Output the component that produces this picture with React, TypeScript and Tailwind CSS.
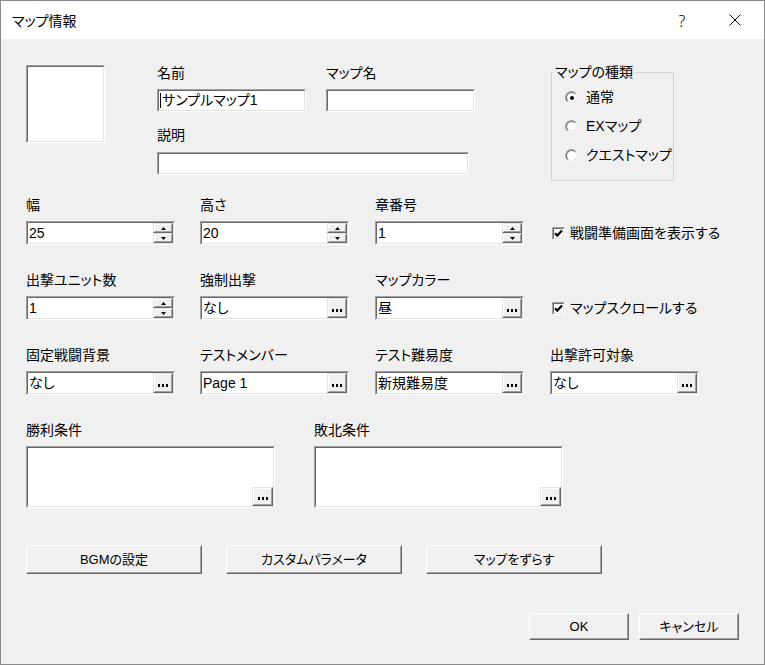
import React from "react";

const fieldOuter =
  "border border-t-[#a0a0a0] border-l-[#a0a0a0] border-b-white border-r-white";
const fieldInner =
  "border border-t-[#696969] border-l-[#696969] border-b-[#e3e3e3] border-r-[#e3e3e3] bg-white";

function RaisedSmall({ className, children }: { className?: string; children?: React.ReactNode }) {
  return (
    <div
      className={`border border-t-[#e3e3e3] border-l-[#e3e3e3] border-b-[#696969] border-r-[#696969] bg-[#f0f0f0] ${className ?? ""}`}
    >
      <div className="w-full h-full border border-t-white border-l-white border-b-[#a0a0a0] border-r-[#a0a0a0] flex items-center justify-center">
        {children}
      </div>
    </div>
  );
}

function Dots() {
  return (
    <div className="flex gap-[2px] pt-[4px]">
      <span className="block w-[2px] h-[3px] bg-black" />
      <span className="block w-[2px] h-[3px] bg-black" />
      <span className="block w-[2px] h-[3px] bg-black" />
    </div>
  );
}

function Spin() {
  return (
    <div className="w-[20px] flex flex-col">
      <RaisedSmall className="flex-1">
        <svg width="5" height="3" viewBox="0 0 5 3">
          <path d="M2.5 0L5 3H0z" fill="#000" />
        </svg>
      </RaisedSmall>
      <RaisedSmall className="flex-1">
        <svg width="5" height="3" viewBox="0 0 5 3">
          <path d="M0 0H5L2.5 3z" fill="#000" />
        </svg>
      </RaisedSmall>
    </div>
  );
}

function Field({
  value,
  kind,
  caret,
  w = "w-[149px]",
  h = "h-[24px]",
}: {
  value?: string;
  kind?: "spin" | "dots";
  caret?: boolean;
  w?: string;
  h?: string;
}) {
  return (
    <div className={`${w} ${h} ${fieldOuter}`}>
      <div className={`h-full flex items-stretch ${fieldInner}`}>
        <div className="flex-1 flex items-center pl-[1px] text-[14px] whitespace-nowrap overflow-hidden">
          {caret && <span className="block w-px h-[15px] bg-black mr-[1px]" />}
          {value}
        </div>
        {kind === "dots" && (
          <RaisedSmall className="w-[20px]">
            <Dots />
          </RaisedSmall>
        )}
        {kind === "spin" && <Spin />}
      </div>
    </div>
  );
}

function Label({ children }: { children?: React.ReactNode }) {
  return <div className="h-[20px] leading-[20px] text-[14px] whitespace-nowrap">{children}</div>;
}

function LabeledField(props: {
  label: string;
  value?: string;
  kind?: "spin" | "dots";
}) {
  return (
    <div>
      <Label>{props.label}</Label>
      <div className="mt-[6px]">
        <Field value={props.value} kind={props.kind} />
      </div>
    </div>
  );
}

function Check({ label }: { label: string }) {
  return (
    <div>
      <div className="h-[20px]" />
      <div className="mt-[6px] h-[24px] flex items-center pl-[2px]">
        <div className="w-[13px] h-[13px] border border-t-[#a0a0a0] border-l-[#a0a0a0] border-b-white border-r-white">
          <div className="w-full h-full border border-t-[#696969] border-l-[#696969] border-b-[#e3e3e3] border-r-[#e3e3e3] bg-white flex items-center justify-center">
            <svg width="9" height="9" viewBox="0 0 9 9">
              <path d="M1 4.2L3.3 6.6L8 1.6" stroke="#000" strokeWidth="2.2" fill="none" />
            </svg>
          </div>
        </div>
        <span className="ml-[5px] text-[14px] whitespace-nowrap">{label}</span>
      </div>
    </div>
  );
}

function Radio({ label, checked }: { label: string; checked?: boolean }) {
  return (
    <div className="h-[29px] flex items-center">
      <div className="w-[13px] h-[13px] rounded-full border border-t-[#a0a0a0] border-l-[#a0a0a0] border-b-white border-r-white">
        <div className="w-full h-full rounded-full border border-t-[#696969] border-l-[#696969] border-b-[#e3e3e3] border-r-[#e3e3e3] bg-white flex items-center justify-center">
          {checked && <span className="block w-[4px] h-[4px] rounded-full bg-black" />}
        </div>
      </div>
      <span className="ml-[8px] text-[14px] whitespace-nowrap">{label}</span>
    </div>
  );
}

function BigButton({ children, className }: { children: React.ReactNode; className: string }) {
  return (
    <div
      className={`border border-t-white border-l-white border-b-[#696969] border-r-[#696969] bg-[#f0f0f0] ${className}`}
    >
      <div className="w-full h-full border border-t-[#f0f0f0] border-l-[#f0f0f0] border-b-[#a0a0a0] border-r-[#a0a0a0] flex items-center justify-center text-[13px] whitespace-nowrap">
        {children}
      </div>
    </div>
  );
}

function TextArea() {
  return (
    <div className={`w-[249px] h-[62px] ${fieldOuter}`}>
      <div className={`h-full flex items-end justify-end ${fieldInner}`}>
        <RaisedSmall className="w-[21px] h-[19px]">
          <Dots />
        </RaisedSmall>
      </div>
    </div>
  );
}

export default function App() {
  return (
    <div className="w-[765px] h-[665px] border border-[#8a8a8a] bg-[#f0f0f0] flex flex-col text-black font-['Liberation_Sans','Noto_Sans_CJK_JP',sans-serif] [font-feature-settings:'palt']">
      {/* Title bar */}
      <div className="h-[38px] bg-white flex items-center pl-[11px] pr-[23px] shrink-0">
        <span className="text-[14px] pt-[2px]">マップ情報</span>
        <span className="ml-auto text-[16px] w-[8px] text-center font-['Noto_Sans',sans-serif] font-light pt-[1px]">?</span>
        <svg className="ml-[43px]" width="12" height="12" viewBox="0 0 12 12">
          <path d="M0.5 0.5L11.5 11.5M11.5 0.5L0.5 11.5" stroke="#000" strokeWidth="1" />
        </svg>
      </div>

      {/* Body */}
      <div className="flex-1 pl-[25px] pr-[25px]">
        {/* Top section */}
        <div className="h-[156px] flex items-start">
          <div className={`mt-[26px] w-[79px] h-[78px] ${fieldOuter}`}>
            <div className={`w-full h-full ${fieldInner}`} />
          </div>

          <div className="ml-[52px] w-[318px] mt-[24px]">
            <div className="flex gap-[20px]">
              <div>
                <Label>名前</Label>
                <div className="mt-[6px]">
                  <Field value="サンプルマップ1" caret h="h-[23px]" />
                </div>
              </div>
              <div>
                <Label>マップ名</Label>
                <div className="mt-[6px]">
                  <Field h="h-[23px]" />
                </div>
              </div>
            </div>
            <div className="mt-[13px]">
              <Label>説明</Label>
              <div className="mt-[7px]">
                <Field w="w-[312px]" h="h-[23px]" />
              </div>
            </div>
          </div>

          <fieldset className="ml-[76px] mt-[25px] w-[123px] h-[117px] border border-[#d3d3d3] px-0">
            <legend className="ml-[1px] px-[2px] text-[14px] leading-[16px]">マップの種類</legend>
            <div className="pl-[13px] pt-[3px]">
              <Radio label="通常" checked />
              <Radio label="EXマップ" />
              <Radio label="クエストマップ" />
            </div>
          </fieldset>
        </div>

        {/* Grid rows */}
        <div className="grid grid-cols-[174px_175px_175px_175px] gap-y-[25px]">
          <LabeledField label="幅" value="25" kind="spin" />
          <LabeledField label="高さ" value="20" kind="spin" />
          <LabeledField label="章番号" value="1" kind="spin" />
          <Check label="戦闘準備画面を表示する" />

          <LabeledField label="出撃ユニット数" value="1" kind="spin" />
          <LabeledField label="強制出撃" value="なし" kind="dots" />
          <LabeledField label="マップカラー" value="昼" kind="dots" />
          <Check label="マップスクロールする" />

          <LabeledField label="固定戦闘背景" value="なし" kind="dots" />
          <LabeledField label="テストメンバー" value="Page 1" kind="dots" />
          <LabeledField label="テスト難易度" value="新規難易度" kind="dots" />
          <LabeledField label="出撃許可対象" value="なし" kind="dots" />
        </div>

        {/* Conditions */}
        <div className="mt-[25px] flex gap-[39px]">
          <div>
            <Label>勝利条件</Label>
            <div className="mt-[6px]">
              <TextArea />
            </div>
          </div>
          <div>
            <Label>敗北条件</Label>
            <div className="mt-[6px]">
              <TextArea />
            </div>
          </div>
        </div>

        {/* Action buttons */}
        <div className="mt-[37px] flex gap-[24px]">
          <BigButton className="w-[176px] h-[29px]">BGMの設定</BigButton>
          <BigButton className="w-[176px] h-[29px]">カスタムパラメータ</BigButton>
          <BigButton className="w-[176px] h-[29px]">マップをずらす</BigButton>
        </div>

        {/* OK / Cancel */}
        <div className="mt-[39px] flex justify-end gap-[10px]">
          <BigButton className="w-[100px] h-[27px]">OK</BigButton>
          <BigButton className="w-[100px] h-[27px]">キャンセル</BigButton>
        </div>
      </div>
    </div>
  );
}
